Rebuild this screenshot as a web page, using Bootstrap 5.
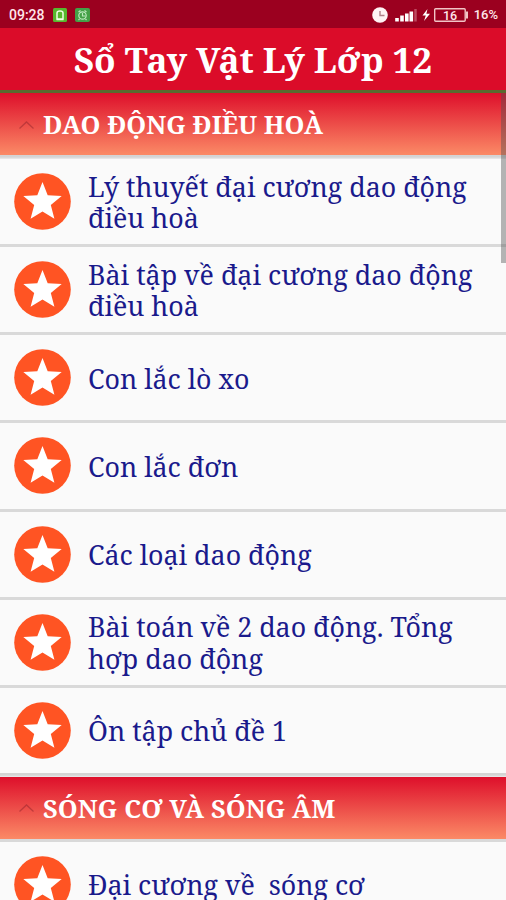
<!DOCTYPE html>
<html lang="vi">
<head>
<meta charset="utf-8">
<meta name="viewport" content="width=device-width, initial-scale=1">
<title>Sổ Tay Vật Lý Lớp 12</title>
<link href="https://cdn.jsdelivr.net/npm/bootstrap@5.3.0/dist/css/bootstrap.min.css" rel="stylesheet">
<style>
  body { font-family: "Noto Serif", "DejaVu Serif Condensed", "DejaVu Serif", serif; background: #fafafa; }
  .screen { height: 900px; }
  .status-bar { height: 28px; background: #9b001f; font: 500 13px/28px Roboto, sans-serif; color: #ffe6ea; padding: 1px 8px 0 9px; }
  .status-bar .clock { font-size: 14px; width: 44px; }
  .app-bar { height: 65px; background: #db0c29; border-bottom: 3px solid #5a6a2f; padding-top: 1px; }
  .app-title { font-size: 35.2px; letter-spacing: -.1px; line-height: 60px; }
  .chapter { height: 62px; background: linear-gradient(#de0f2b, #fb8a66); padding: 1px 0 0 18px; font-size: 25.3px; }
  .chapter.second { padding-top: 0; letter-spacing: .12px; }
  .chapter svg { margin-right: 8px; }
  .rule { height: 3px; background: #d9d9d9; }
  .rule-head { height: 4px; background: linear-gradient(#d4d4d4 50%, #ececec); }
  .topic { height: 85.15px; padding-left: 14px; color: #1a1a8c; font-size: 26.8px; line-height: 31.5px; }
  .topic span { padding-top: 1px; white-space: nowrap; }
  .topic svg { margin-right: 17px; }
  .scroll-thumb { top: 93px; right: 0; width: 5px; height: 170px; background: rgba(80,80,80,.42); }
</style>
<script src="https://cdn.jsdelivr.net/npm/bootstrap@5.3.0/dist/js/bootstrap.bundle.min.js"></script>
</head>
<body>
<svg class="d-none">
  <symbol id="star" viewBox="0 0 57 57">
    <circle cx="28.5" cy="28.5" r="28.3" fill="#ff5423"/>
    <path fill="#fff" d="M28.5 9l5.200 13.200 14 .8-10.900 9 3.600 13.700-11.900-7.300-11.900 7.300 3.600-13.700-10.900-9 14-.8z"/>
  </symbol>
  <symbol id="caret" viewBox="0 0 17 10">
    <path d="M1.500 8.500l7-6.500 7 6.500" fill="none" stroke="#7c1c26" stroke-opacity=".4" stroke-width="1.300"/>
  </symbol>
</svg>
<div class="screen position-relative overflow-hidden">
  <div class="status-bar d-flex align-items-center">
    <span class="clock">09:28</span>
    <svg width="38" height="16" viewBox="0 0 38 16">
      <rect x="0" y="1" width="14" height="14" rx="1.500" fill="#58b82e"/>
      <path d="M4 12V6q0-2 3-2t3 2v6zM3.500 12.500h7" fill="none" stroke="#efffe5" stroke-width="1.500"/>
      <rect x="22" y="1" width="15" height="14" rx="2" fill="#43a047"/>
      <circle cx="29.500" cy="8.500" r="3.700" fill="none" stroke="#bce8bd" stroke-width="1.200"/>
      <path d="M25.500 5l2-1.500m4 0l2 1.500M29.500 6v3h3M26.500 12l-1 1m7-1l1 1" fill="none" stroke="#bce8bd" stroke-width="1.200"/>
    </svg>
    <svg class="ms-auto" width="98" height="18" viewBox="0 0 98 18">
      <circle cx="8" cy="9" r="7.800" fill="#fff3f4"/>
      <path d="M8 5v4.500h4.500" fill="none" stroke="#b08088" stroke-width="1.400"/>
      <path d="M25 15.500v-3.500M30 15.500V9.500M34.800 15.500V7.500M39.300 15.500V5.500" stroke="#fff" stroke-width="3.600"/>
      <path d="M43.500 15.500V3" stroke="#bd4a60" stroke-width="2.500"/>
      <path d="M55.500 3l-5 6.500h3.300L52 15l6-7.200h-3.600z" fill="#fff"/>
      <rect x="62.700" y="2.700" width="30.500" height="12.600" rx="1" fill="none" stroke="#f2c4c6" stroke-width="1.400"/>
      <path d="M95 5.500v7" stroke="#f2c4c6" stroke-width="2"/>
      <text x="78" y="13.500" text-anchor="middle" fill="#ffe6ea" font-size="12.500">16</text>
    </svg>
    <span class="ms-1">16%</span>
  </div>
  <header class="app-bar text-center text-white">
    <h1 class="app-title fw-bold m-0">Sổ Tay Vật Lý Lớp 12</h1>
  </header>
  <main>
    <h2 class="chapter d-flex align-items-center fw-bold text-white m-0"><svg width="17" height="10"><use href="#caret"/></svg><span>DAO ĐỘNG ĐIỀU HOÀ</span></h2>
    <div class="rule-head"></div>
    <div class="topic d-flex align-items-center"><svg width="57" height="57"><use href="#star"/></svg><span>Lý thuyết đại cương dao động<br>điều hoà</span></div>
    <div class="rule"></div>
    <div class="topic d-flex align-items-center"><svg width="57" height="57"><use href="#star"/></svg><span>Bài tập về đại cương dao động<br>điều hoà</span></div>
    <div class="rule"></div>
    <div class="topic d-flex align-items-center"><svg width="57" height="57"><use href="#star"/></svg><span>Con lắc lò xo</span></div>
    <div class="rule"></div>
    <div class="topic d-flex align-items-center"><svg width="57" height="57"><use href="#star"/></svg><span>Con lắc đơn</span></div>
    <div class="rule"></div>
    <div class="topic d-flex align-items-center"><svg width="57" height="57"><use href="#star"/></svg><span>Các loại dao động</span></div>
    <div class="rule"></div>
    <div class="topic d-flex align-items-center"><svg width="57" height="57"><use href="#star"/></svg><span>Bài toán về 2 dao động. Tổng<br>hợp dao động</span></div>
    <div class="rule"></div>
    <div class="topic d-flex align-items-center"><svg width="57" height="57"><use href="#star"/></svg><span>Ôn tập chủ đề 1</span></div>
    <div class="rule-head"></div>
    <h2 class="chapter second d-flex align-items-center fw-bold text-white m-0"><svg width="17" height="10"><use href="#caret"/></svg><span>SÓNG CƠ VÀ SÓNG ÂM</span></h2>
    <div class="rule"></div>
    <div class="topic d-flex align-items-center"><svg width="57" height="57"><use href="#star"/></svg><span>Đại cương về&nbsp; sóng cơ</span></div>
  </main>
  <div class="scroll-thumb position-absolute"></div>
</div>
</body>
</html>
